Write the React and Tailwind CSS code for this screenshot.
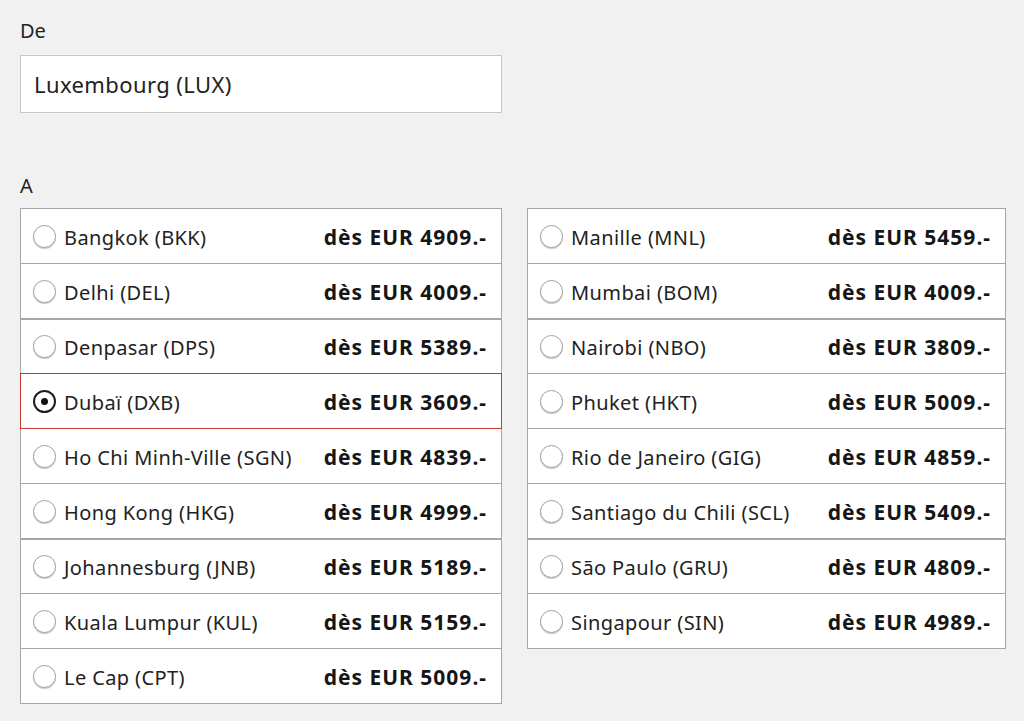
const left = [
  { name: 'Bangkok (BKK)', price: '4909' },
  { name: 'Delhi (DEL)', price: '4009' },
  { name: 'Denpasar (DPS)', price: '5389', thick: true },
  { name: 'Dubaï (DXB)', price: '3609', selected: true },
  { name: 'Ho Chi Minh-Ville (SGN)', price: '4839' },
  { name: 'Hong Kong (HKG)', price: '4999' },
  { name: 'Johannesburg (JNB)', price: '5189', thick: true },
  { name: 'Kuala Lumpur (KUL)', price: '5159' },
  { name: 'Le Cap (CPT)', price: '5009' },
];

const right = [
  { name: 'Manille (MNL)', price: '5459' },
  { name: 'Mumbai (BOM)', price: '4009' },
  { name: 'Nairobi (NBO)', price: '3809', thick: true },
  { name: 'Phuket (HKT)', price: '5009' },
  { name: 'Rio de Janeiro (GIG)', price: '4859' },
  { name: 'Santiago du Chili (SCL)', price: '5409' },
  { name: 'São Paulo (GRU)', price: '4809', thick: true },
  { name: 'Singapour (SIN)', price: '4989' },
];

function Radio({ checked }) {
  if (checked) {
    return (
      <span className="flex h-[23px] w-[23px] shrink-0 items-center justify-center rounded-full border-2 border-[#1d1d1d] bg-white">
        <span className="h-[7px] w-[7px] rounded-full bg-[#111]" />
      </span>
    );
  }
  return (
    <span className="h-[23px] w-[23px] shrink-0 rounded-full border border-[#a3a19e] bg-white shadow-[0_1px_1px_rgba(0,0,0,0.2)]" />
  );
}

function Row({ item, first }) {
  return (
    <div
      className={
        'relative flex h-[56px] items-center border pl-[12px] pr-[14px] ' +
        (first ? '' : '-mt-px ') +
        (item.thick ? 'border-t-2 ' : '') +
        (item.selected ? 'z-10 border-[#c8392f] ' : 'border-[#a9a7a3] ')
      }
    >
      <Radio checked={item.selected} />
      <span className="ml-[8px] flex-1 pt-[3px] text-[20px] tracking-[0.4px] text-[#222]">{item.name}</span>
      <span className="pt-[3px] text-[21px] font-bold tracking-[1px] text-[#161616]">dès EUR {item.price}.-</span>
    </div>
  );
}

function List({ items, className }) {
  return (
    <div className={'flex flex-col bg-white ' + className}>
      {items.map((item, i) => (
        <Row key={item.name} item={item} first={i === 0} />
      ))}
    </div>
  );
}

export default function App() {
  return (
    <div className="min-h-[721px] bg-[#f1f1f1] pl-[20px] pt-[17px] font-['Noto_Sans',sans-serif] text-[#222]">
      <div className="text-[20px] leading-[28px]">De</div>
      <div className="mt-[10px] flex h-[58px] w-[482px] items-center border border-[#c6c6c6] bg-white pl-[13px] pt-[1px] text-[22px] tracking-[0.4px]">
        Luxembourg (LUX)
      </div>
      <div className="mt-[59px] text-[20px] leading-[28px]">A</div>
      <div className="mt-[8px] flex items-start gap-[25px]">
        <List items={left} className="w-[482px]" />
        <List items={right} className="w-[479px]" />
      </div>
    </div>
  );
}
